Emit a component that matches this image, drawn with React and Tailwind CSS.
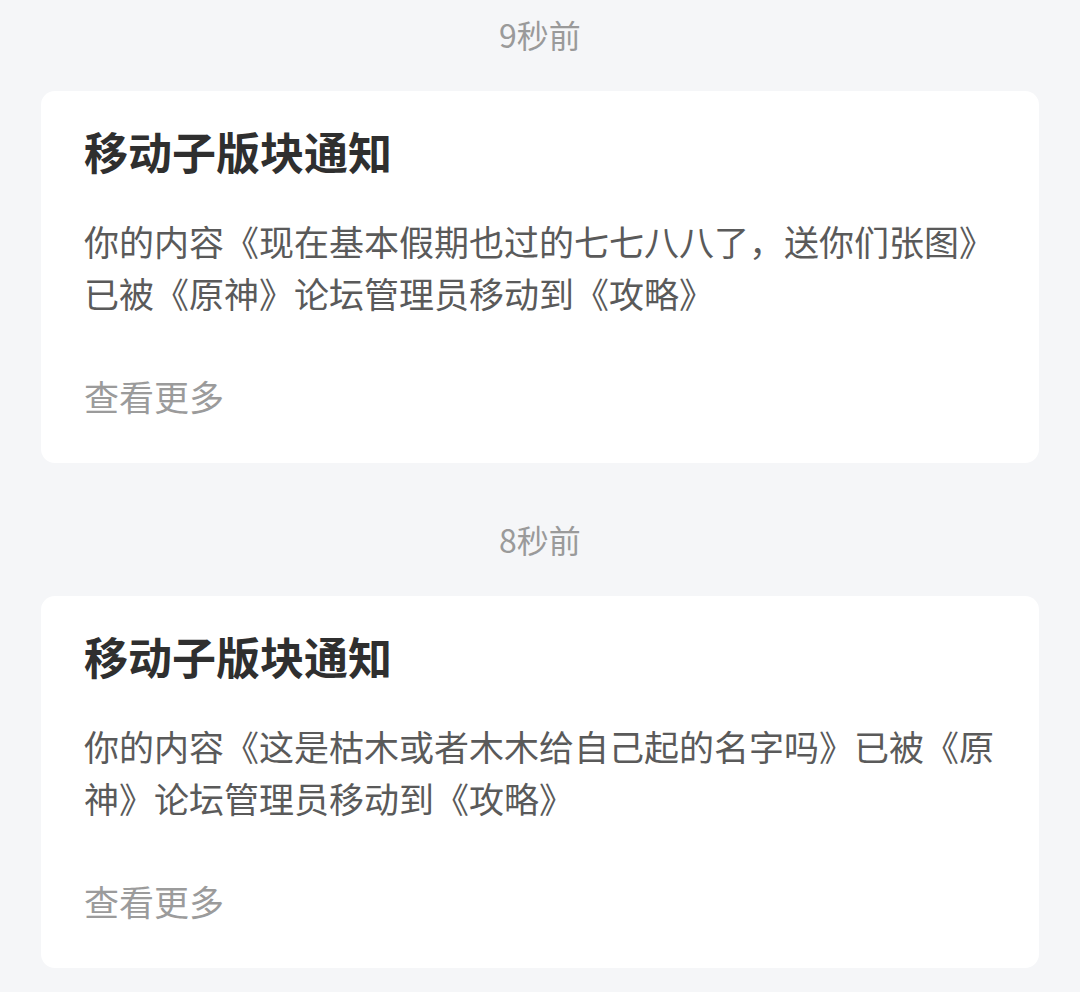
const notices = [
  {
    time: "9秒前",
    title: "移动子版块通知",
    body: "你的内容《现在基本假期也过的七七八八了，送你们张图》已被《原神》论坛管理员移动到《攻略》",
  },
  {
    time: "8秒前",
    title: "移动子版块通知",
    body: "你的内容《这是枯木或者木木给自己起的名字吗》已被《原神》论坛管理员移动到《攻略》",
  },
];

const font = { fontFamily: '"Noto Sans CJK SC", "Noto Sans", sans-serif' };

function NoticeCard({ notice }) {
  return (
    <div className="flex flex-col">
      <div className="h-[44px] mt-[12px] mb-[35px] text-center text-[32px] leading-[44px] text-[#9a9a9a]">
        {notice.time}
      </div>
      <div className="mx-[41px] bg-white rounded-[14px] px-[43px] pt-[35px] pb-[42px]">
        <div className="text-[44px] leading-[50px] font-bold text-[#2f2f2f]">{notice.title}</div>
        <div className="mt-[39px] text-[35px] leading-[52px] text-[#5a5a5a]">{notice.body}</div>
        <div className="mt-[52px] text-[35px] leading-[50px] text-[#9b9b9b]">查看更多</div>
      </div>
    </div>
  );
}

export default function App() {
  return (
    <div className="min-h-screen w-[1080px] bg-[#f5f6f8]" style={font}>
      <div className="flex flex-col gap-[42px]">
        {notices.map((n, i) => (
          <NoticeCard key={i} notice={n} />
        ))}
      </div>
    </div>
  );
}
